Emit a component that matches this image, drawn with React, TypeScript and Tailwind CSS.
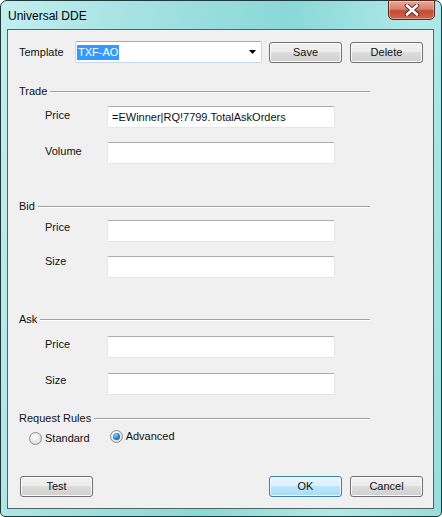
import React from "react";

const font = "font-['Liberation_Sans',Arial,sans-serif]";

function TextBox({ value }: { value?: string }) {
  return (
    <div className="flex h-[22px] w-[228px] shrink-0 items-center rounded-[2px] border border-[#e3e6ec] border-t-[#abadb3] bg-white pl-[4px] text-[11px] text-[#111]">
      {value}
    </div>
  );
}

function Button({ label, primary = false }: { label: string; primary?: boolean }) {
  return (
    <div
      className={`flex h-[21px] w-[73px] items-center justify-center rounded-[3px] border text-[11px] text-[#111] ${
        primary
          ? "border-[#3c7fb1] bg-[linear-gradient(#eaf6fd_0%,#d9f0fc_50%,#bee6fd_50%,#a7d9f5_100%)] shadow-[inset_0_0_0_1px_#f2fbff]"
          : "border-[#707070] bg-[linear-gradient(#f2f2f2_0%,#ebebeb_50%,#dddddd_50%,#cfcfcf_100%)] shadow-[inset_0_0_0_1px_#fbfbfb]"
      }`}
    >
      {label}
    </div>
  );
}

function Header({ title, mt }: { title: string; mt: string }) {
  return (
    <div className={`flex h-[14px] w-[351px] items-center gap-[3px] text-[11px] text-[#111] ${mt}`}>
      <span>{title}</span>
      <div className="h-px flex-1 bg-[#a0a0a0] shadow-[0_1px_0_#ffffff]" />
    </div>
  );
}

function Field({ label, value, mt, lt = "mt-[2px]" }: { label: string; value?: string; mt: string; lt?: string }) {
  return (
    <div className={`flex items-start ${mt}`}>
      <span className={`w-[88px] shrink-0 pl-[26px] text-[11px] leading-[14px] text-[#111] ${lt}`}>{label}</span>
      <TextBox value={value} />
    </div>
  );
}

function Radio({ checked }: { checked?: boolean }) {
  return (
    <div className="flex size-[13px] items-center justify-center rounded-full border border-[#8a8c8e] bg-[radial-gradient(circle_at_40%_35%,#ffffff_0%,#e6e6e6_55%,#cfcfcf_100%)]">
      {checked ? (
        <div className="size-[7px] rounded-full bg-[radial-gradient(circle_at_40%_35%,#8fd3ff_0%,#2a8ad4_45%,#0d4f8f_100%)]" />
      ) : null}
    </div>
  );
}

export default function App() {
  return (
    <div className={`${font} relative flex h-[517px] w-[442px] flex-col rounded-t-[7px] rounded-b-[5px] border border-[#203a3c] bg-[linear-gradient(100deg,#c4efef_0%,#a6e2e3_25%,#8ad8d8_55%,#b2e9e9_80%,#98dcdc_100%)]`}>
      <div className="flex h-[28px] items-center pl-[7px] pt-[1px] text-[12px] text-black">Universal DDE</div>
      <div className="absolute right-[6px] top-[-1px] flex h-[20px] w-[47px] items-center justify-center rounded-b-[5px] border border-[#5a2a22] bg-[linear-gradient(#eaa898_0%,#d8806c_45%,#c24a32_55%,#d0684c_100%)] shadow-[inset_0_0_0_1px_rgba(255,255,255,0.35)]">
        <svg width="16" height="12" viewBox="0 0 16 12">
          <path d="M3 1.5 L13 10.5 M13 1.5 L3 10.5" stroke="#5a2a22" strokeWidth="4.5" strokeLinecap="round" />
          <path d="M3 1.5 L13 10.5 M13 1.5 L3 10.5" stroke="#ffffff" strokeWidth="2.6" strokeLinecap="round" />
        </svg>
      </div>
      <div className="ml-[6px] flex h-[480px] w-[427px] flex-col border border-[#4e6465] bg-[#f0f0f0] pl-[11px]">
        <div className="mt-[11px] flex items-start">
          <span className="flex h-[22px] w-[56px] items-center text-[11px] text-[#111]">Template</span>
          <div className="flex h-[22px] w-[187px] items-center rounded-[2px] border border-[#c5d7ea] border-t-[#8fb3d6] bg-white pl-[1px] pr-[5px]">
            <span className="bg-[#3399ff] px-[1px] text-[11px] leading-[15px] text-white">TXF-AO</span>
            <span className="flex-1" />
            <svg width="7" height="4" viewBox="0 0 7 4">
              <path d="M0 0 H7 L3.5 4 Z" fill="#000" />
            </svg>
          </div>
          <div className="ml-[7px] mt-[1px] flex gap-[8px]">
            <Button label="Save" />
            <Button label="Delete" />
          </div>
        </div>

        <Header title="Trade" mt="mt-[21px]" />
        <Field label="Price" value="=EWinner|RQ!7799.TotalAskOrders" mt="mt-[8px]" />
        <Field label="Volume" mt="mt-[14px]" />

        <Header title="Bid" mt="mt-[35px]" />
        <Field label="Price" mt="mt-[7px]" lt="mt-0" />
        <Field label="Size" mt="mt-[14px]" lt="mt-[-2px]" />

        <Header title="Ask" mt="mt-[34px]" />
        <Field label="Price" mt="mt-[10px]" lt="mt-[1px]" />
        <Field label="Size" mt="mt-[15px]" lt="mt-0" />

        <Header title="Request Rules" mt="mt-[16px]" />
        <div className="mt-[5px] flex h-[13px] items-start text-[11px] text-[#111]">
          <div className="ml-[10px] flex items-center gap-[3px]">
            <Radio />
            <span>Standard</span>
          </div>
          <div className="ml-[20px] mt-[-2px] flex items-center gap-[3px]">
            <Radio checked />
            <span>Advanced</span>
          </div>
        </div>

        <div className="mt-[33px] flex items-center">
          <div className="ml-[1px]">
            <Button label="Test" />
          </div>
          <span className="flex-1" />
          <div className="mr-[10px] flex gap-[8px]">
            <Button label="OK" primary />
            <Button label="Cancel" />
          </div>
        </div>
      </div>
    </div>
  );
}
